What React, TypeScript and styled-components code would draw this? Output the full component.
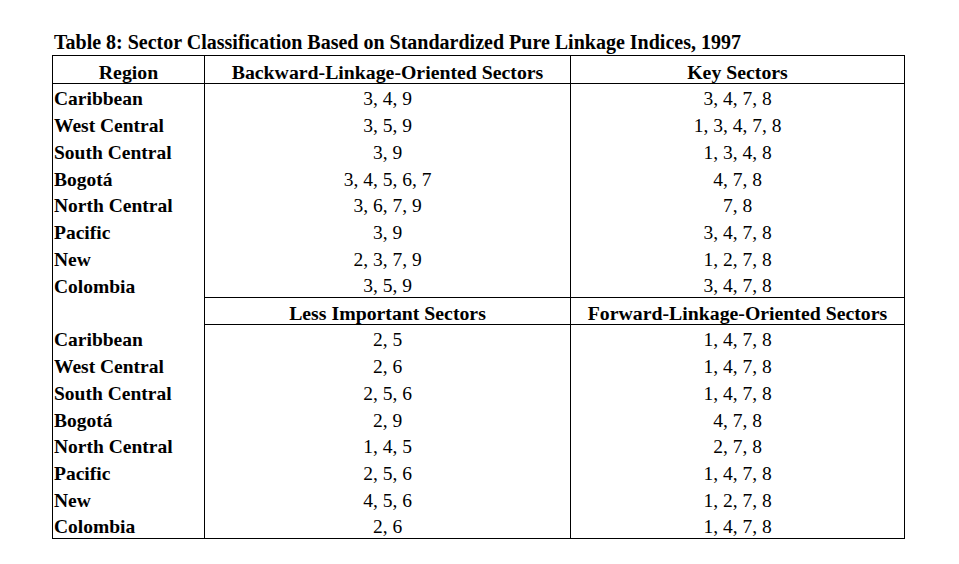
import React from "react";
import styled, { createGlobalStyle } from "styled-components";

const Global = createGlobalStyle`
  html, body { margin: 0; padding: 0; background: #fff; }
  body { font-family: "Liberation Serif", "Times New Roman", serif; color: #000; }
`;

const Page = styled.div`
  padding: 30px 0 0 52px;
`;

const Title = styled.div`
  font-family: "Liberation Serif", "Times New Roman", serif;
  font-weight: bold;
  font-size: 20px;
  line-height: 24px;
  padding-left: 2px;
  height: 25px;
  white-space: nowrap;
`;

const Table = styled.table`
  border-collapse: collapse;
  table-layout: fixed;
  width: 853px;
  border: 1px solid #000;
  font-family: "Liberation Serif", "Times New Roman", serif;
  font-size: 19.5px;
`;

const Col = styled.col<{ $w: number }>`
  width: ${(p) => p.$w}px;
`;

const Row = styled.tr<{ $h: number }>`
  height: ${(p) => p.$h}px;
`;

const HeadCell = styled.th<{ $line?: boolean }>`
  font-weight: bold;
  font-size: 19.8px;
  text-align: center;
  vertical-align: bottom;
  padding: 0;
  line-height: 22px;
  border-left: 1px solid #000;
  border-right: 1px solid #000;
  border-bottom: ${(p) => (p.$line ? "1px solid #000" : "none")};
  border-top: ${(p) => (p.$line ? "1px solid #000" : "none")};
  white-space: nowrap;
`;

const RegionCell = styled.td`
  font-weight: bold;
  text-align: left;
  vertical-align: bottom;
  padding: 0 0 0 1px;
  line-height: 22px;
  border-left: 1px solid #000;
  border-right: 1px solid #000;
  white-space: nowrap;
`;

const ValueCell = styled.td<{ $line?: boolean }>`
  text-align: center;
  vertical-align: bottom;
  padding: 0;
  line-height: 22px;
  border-left: 1px solid #000;
  border-right: 1px solid #000;
  border-bottom: ${(p) => (p.$line ? "1px solid #000" : "none")};
  white-space: nowrap;
`;

const regions = [
  "Caribbean",
  "West Central",
  "South Central",
  "Bogotá",
  "North Central",
  "Pacific",
  "New",
  "Colombia",
];

const backward = ["3, 4, 9", "3, 5, 9", "3, 9", "3, 4, 5, 6, 7", "3, 6, 7, 9", "3, 9", "2, 3, 7, 9", "3, 5, 9"];
const key = ["3, 4, 7, 8", "1, 3, 4, 7, 8", "1, 3, 4, 8", "4, 7, 8", "7, 8", "3, 4, 7, 8", "1, 2, 7, 8", "3, 4, 7, 8"];
const lessImportant = ["2, 5", "2, 6", "2, 5, 6", "2, 9", "1, 4, 5", "2, 5, 6", "4, 5, 6", "2, 6"];
const forward = ["1, 4, 7, 8", "1, 4, 7, 8", "1, 4, 7, 8", "4, 7, 8", "2, 7, 8", "1, 4, 7, 8", "1, 2, 7, 8", "1, 4, 7, 8"];

export default function App() {
  return (
    <Page>
      <Global />
      <Title>Table 8: Sector Classification Based on Standardized Pure Linkage Indices, 1997</Title>
      <Table>
        <colgroup>
          <Col $w={152} />
          <Col $w={366} />
          <Col $w={334} />
        </colgroup>
        <tbody>
          <Row $h={28}>
            <HeadCell $line>Region</HeadCell>
            <HeadCell $line>Backward-Linkage-Oriented Sectors</HeadCell>
            <HeadCell $line>Key Sectors</HeadCell>
          </Row>
          {regions.map((r, i) => (
            <Row $h={26.75} key={"a" + r}>
              <RegionCell>{r}</RegionCell>
              <ValueCell $line={i === regions.length - 1}>{backward[i]}</ValueCell>
              <ValueCell $line={i === regions.length - 1}>{key[i]}</ValueCell>
            </Row>
          ))}
          <Row $h={27}>
            <HeadCell />
            <HeadCell $line>Less Important Sectors</HeadCell>
            <HeadCell $line>Forward-Linkage-Oriented Sectors</HeadCell>
          </Row>
          {regions.map((r, i) => (
            <Row $h={26.75} key={"b" + r}>
              <RegionCell>{r}</RegionCell>
              <ValueCell>{lessImportant[i]}</ValueCell>
              <ValueCell>{forward[i]}</ValueCell>
            </Row>
          ))}
        </tbody>
      </Table>
    </Page>
  );
}
